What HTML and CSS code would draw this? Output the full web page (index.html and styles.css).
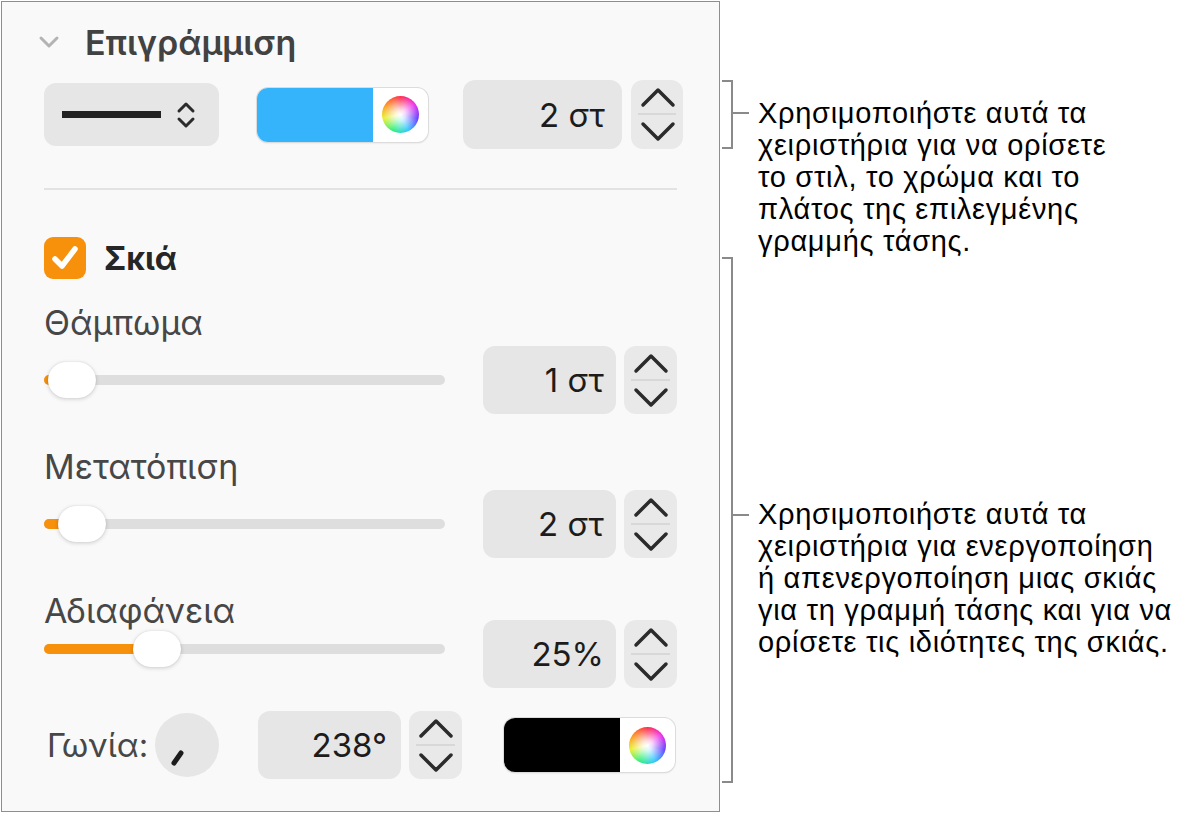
FILE: index.html
```html
<!DOCTYPE html>
<html lang="el">
<head>
    <meta charset="UTF-8">
    <meta name="viewport" content="width=device-width, initial-scale=1.0">
    <title>Επιγράμμιση</title>
    <link rel="stylesheet" href="styles.css">
</head>
<body>
<div class="page">
    <div class="panel">
        <div class="section-head">
            <svg class="disclosure" width="22" height="14" viewBox="0 0 22 14"><path d="M3 3 L11 11 L19 3" fill="none" stroke="#b3b3b3" stroke-width="3" stroke-linecap="round" stroke-linejoin="round"/></svg>
            <span class="section-title">Επιγράμμιση</span>
        </div>

        <div class="stroke-row">
            <div class="popup">
                <span class="line-sample"></span>
                <svg width="22" height="30" viewBox="0 0 22 30"><path d="M4 11 L11 4 L18 11 M4 19 L11 26 L18 19" fill="none" stroke="#2b2b2b" stroke-width="3" stroke-linecap="round" stroke-linejoin="round"/></svg>
            </div>
            <div class="well well-top">
                <span class="swatch swatch-blue"></span>
                <span class="wheel-box"><span class="wheel"></span></span>
            </div>
            <div class="value value-top">2 στ</div>
            <div class="stepper stepper-top">
                <svg width="52" height="69" viewBox="0 0 52 69"><path d="M12 25 L27 10 L42 25 M12 44 L27 59 L42 44" fill="none" stroke="#2b2b2b" stroke-width="3.5" stroke-linecap="round" stroke-linejoin="round"/><path d="M7 34 H45" stroke="#d2d2d2" stroke-width="1.5"/></svg>
            </div>
        </div>

        <div class="separator"></div>

        <div class="check-row">
            <span class="checkbox">
                <svg width="42" height="42" viewBox="0 0 42 42"><path d="M11 22 L18 29 L31 12" fill="none" stroke="#fff" stroke-width="5.5" stroke-linecap="round" stroke-linejoin="round"/></svg>
            </span>
            <span class="check-label">Σκιά</span>
        </div>

        <div class="label label-blur">Θάμπωμα</div>
        <div class="slider-row">
            <div class="slider">
                <span class="track"></span>
                <span class="fill" style="width: 12px"></span>
                <span class="thumb" style="left: 4px"></span>
            </div>
            <div class="value">1 στ</div>
            <div class="stepper">
                <svg width="53" height="68" viewBox="0 0 53 68"><path d="M12 25 L27 10 L42 25 M12 44 L27 59 L42 44" fill="none" stroke="#2b2b2b" stroke-width="3.5" stroke-linecap="round" stroke-linejoin="round"/><path d="M7 34 H46" stroke="#d2d2d2" stroke-width="1.5"/></svg>
            </div>
        </div>

        <div class="label">Μετατόπιση</div>
        <div class="slider-row">
            <div class="slider">
                <span class="track"></span>
                <span class="fill" style="width: 20px"></span>
                <span class="thumb" style="left: 14px"></span>
            </div>
            <div class="value">2 στ</div>
            <div class="stepper">
                <svg width="53" height="68" viewBox="0 0 53 68"><path d="M12 25 L27 10 L42 25 M12 44 L27 59 L42 44" fill="none" stroke="#2b2b2b" stroke-width="3.5" stroke-linecap="round" stroke-linejoin="round"/><path d="M7 34 H46" stroke="#d2d2d2" stroke-width="1.5"/></svg>
            </div>
        </div>

        <div class="label">Αδιαφάνεια</div>
        <div class="slider-row slider-row-tight">
            <div class="slider slider-raised">
                <span class="track"></span>
                <span class="fill" style="width: 100px"></span>
                <span class="thumb" style="left: 89px"></span>
            </div>
            <div class="value">25%</div>
            <div class="stepper">
                <svg width="53" height="68" viewBox="0 0 53 68"><path d="M12 25 L27 10 L42 25 M12 44 L27 59 L42 44" fill="none" stroke="#2b2b2b" stroke-width="3.5" stroke-linecap="round" stroke-linejoin="round"/><path d="M7 34 H46" stroke="#d2d2d2" stroke-width="1.5"/></svg>
            </div>
        </div>

        <div class="angle-row">
            <span class="angle-label">Γωνία:</span>
            <span class="knob">
                <svg width="64" height="64" viewBox="0 0 64 64"><path d="M19 50 L26 40" stroke="#1c1c1c" stroke-width="5" stroke-linecap="round"/></svg>
            </span>
            <div class="value value-angle">238°</div>
            <div class="stepper">
                <svg width="53" height="68" viewBox="0 0 53 68"><path d="M12 25 L27 10 L42 25 M12 44 L27 59 L42 44" fill="none" stroke="#2b2b2b" stroke-width="3.5" stroke-linecap="round" stroke-linejoin="round"/><path d="M7 34 H46" stroke="#d2d2d2" stroke-width="1.5"/></svg>
            </div>
            <div class="well well-bottom">
                <span class="swatch swatch-black"></span>
                <span class="wheel-box"><span class="wheel"></span></span>
            </div>
        </div>
    </div>

    <div class="callouts">
        <div class="callout callout-stroke">
            <span class="bracket"></span>
            <p class="note">Χρησιμοποιήστε αυτά τα<br>χειριστήρια για να ορίσετε<br>το στιλ, το χρώμα και το<br>πλάτος της επιλεγμένης<br>γραμμής τάσης.</p>
        </div>
        <div class="callout callout-shadow">
            <span class="bracket"></span>
            <p class="note">Χρησιμοποιήστε αυτά τα<br>χειριστήρια για ενεργοποίηση<br>ή απενεργοποίηση μιας σκιάς<br>για τη γραμμή τάσης και για να<br>ορίσετε τις ιδιότητες της σκιάς.</p>
        </div>
    </div>
</div>
</body>
</html>
```

FILE: styles.css
```css
body {
    margin: 0;
    background-color: #fff;
    font-family: Inter, "Noto Sans", sans-serif;
    color: #1f1f1f;
}
.page {
    display: flex;
    padding: 1px 0 0 1px;
}
.panel {
    width: 719px;
    height: 811px;
    box-sizing: border-box;
    border: 1px solid #8e8e8e;
    background-color: #f9f9f9;
    padding: 0 35px 0 42px;
    flex-shrink: 0;
}
.section-head {
    display: flex;
    align-items: center;
    height: 40px;
    margin-top: 20px;
}
.disclosure {
    margin-left: -6px;
    margin-right: 25px;
}
.section-title {
    font-size: 34px;
    font-weight: 600;
    color: #424242;
}
.stroke-row {
    display: flex;
    align-items: center;
    height: 69px;
    margin-top: 18px;
}
.popup {
    width: 175px;
    height: 63px;
    box-sizing: border-box;
    border-radius: 12px;
    background-color: #e6e6e6;
    display: flex;
    align-items: center;
    padding-left: 18px;
}
.line-sample {
    width: 99px;
    height: 7px;
    background-color: #222;
    margin-right: 14px;
}
.well {
    display: flex;
    height: 54px;
    width: 171px;
    border-radius: 11px;
    overflow: hidden;
    box-shadow: 0 0 0 1px #dcdcdc, 0 1px 2px rgba(0, 0, 0, 0.15);
    background-color: #fff;
}
.well-top {
    margin-left: 38px;
}
.swatch {
    width: 116px;
}
.swatch-blue {
    background-color: #35b4fb;
}
.swatch-black {
    background-color: #000;
}
.wheel-box {
    flex: 1;
    display: flex;
    align-items: center;
    justify-content: center;
}
.wheel {
    width: 37px;
    height: 37px;
    border-radius: 50%;
    background: radial-gradient(circle, #fff 0%, rgba(255, 255, 255, 0.8) 20%, rgba(255, 255, 255, 0) 68%),
        conic-gradient(#ff3050, #f030e8, #6a40ff, #30c8ff, #30f080, #e8f030, #ff8a20, #ff3050);
}
.value {
    width: 133px;
    height: 68px;
    box-sizing: border-box;
    border-radius: 12px;
    background-color: #e6e6e6;
    display: flex;
    align-items: center;
    justify-content: flex-end;
    padding-right: 12px;
    font-size: 33px;
    color: #1c1c1c;
    margin-left: 38px;
}
.value-top {
    width: 159px;
    height: 69px;
    margin-left: 35px;
    padding-right: 17px;
}
.stepper {
    width: 53px;
    height: 68px;
    border-radius: 12px;
    background-color: #e9e9e9;
    margin-left: 8px;
    display: flex;
}
.stepper-top {
    width: 52px;
    height: 69px;
    margin-left: 9px;
}
.separator {
    width: 633px;
    height: 2px;
    background-color: #e3e3e3;
    margin-top: 39px;
}
.check-row {
    display: flex;
    align-items: center;
    height: 42px;
    margin-top: 47px;
}
.checkbox {
    width: 42px;
    height: 42px;
    border-radius: 9px;
    background-color: #f7900b;
    display: flex;
}
.check-label {
    margin-left: 18px;
    font-size: 32px;
    font-weight: 700;
    color: #262626;
}
.label {
    height: 40px;
    line-height: 40px;
    font-size: 34px;
    color: #474747;
    margin-top: 33px;
}
.label-blur {
    margin-top: 24px;
}
.slider-row {
    display: flex;
    align-items: center;
    height: 68px;
    margin-top: 3px;
}
.slider-row-tight {
    margin-top: -11px;
}
.slider {
    position: relative;
    width: 401px;
    height: 36px;
}
.slider-raised {
    margin-bottom: 10px;
}
.track {
    position: absolute;
    left: 0;
    right: 0;
    top: 13px;
    height: 10px;
    border-radius: 5px;
    background-color: #dedede;
}
.fill {
    position: absolute;
    left: 0;
    top: 13px;
    height: 10px;
    border-radius: 5px;
    background-color: #f7900b;
}
.thumb {
    position: absolute;
    top: 0;
    width: 48px;
    height: 36px;
    border-radius: 18px;
    background-color: #fff;
    box-shadow: 0 1px 4px rgba(0, 0, 0, 0.18), 0 0 1px rgba(0, 0, 0, 0.15);
}
.angle-row {
    display: flex;
    align-items: center;
    height: 68px;
    margin-top: 23px;
}
.angle-label {
    width: 100px;
    font-size: 33px;
    color: #474747;
    margin-left: 3px;
    white-space: nowrap;
}
.knob {
    width: 64px;
    height: 64px;
    border-radius: 50%;
    background-color: #e6e6e6;
    margin-left: 8px;
    display: flex;
}
.value-angle {
    width: 143px;
    margin-left: 39px;
    padding-right: 14px;
}
.well-bottom {
    margin-left: 42px;
}
.callouts {
    display: flex;
    flex-direction: column;
    font-family: "Liberation Sans", Arial, sans-serif;
    color: #000;
}
.callout {
    display: flex;
    align-items: flex-start;
}
.callout-stroke {
    margin-top: 79px;
}
.bracket {
    position: relative;
    width: 11px;
    margin-left: 2px;
    box-sizing: border-box;
    border: 2px solid #8a8a8a;
    border-left: none;
    flex-shrink: 0;
}
.bracket::after {
    content: "";
    position: absolute;
    left: 100%;
    width: 18px;
    height: 2px;
    background-color: #8a8a8a;
}
.callout-stroke .bracket {
    height: 69px;
}
.callout-stroke .bracket::after {
    top: 30px;
}
.callout-shadow .bracket {
    height: 526px;
}
.callout-shadow .bracket::after {
    top: 255px;
}
.note {
    margin: 0 0 0 25px;
    font-size: 29px;
    letter-spacing: 0.7px;
    line-height: 32px;
    white-space: nowrap;
}
.callout-stroke .note {
    margin-top: 17px;
}
.callout-shadow .note {
    margin-top: 241px;
}
```
